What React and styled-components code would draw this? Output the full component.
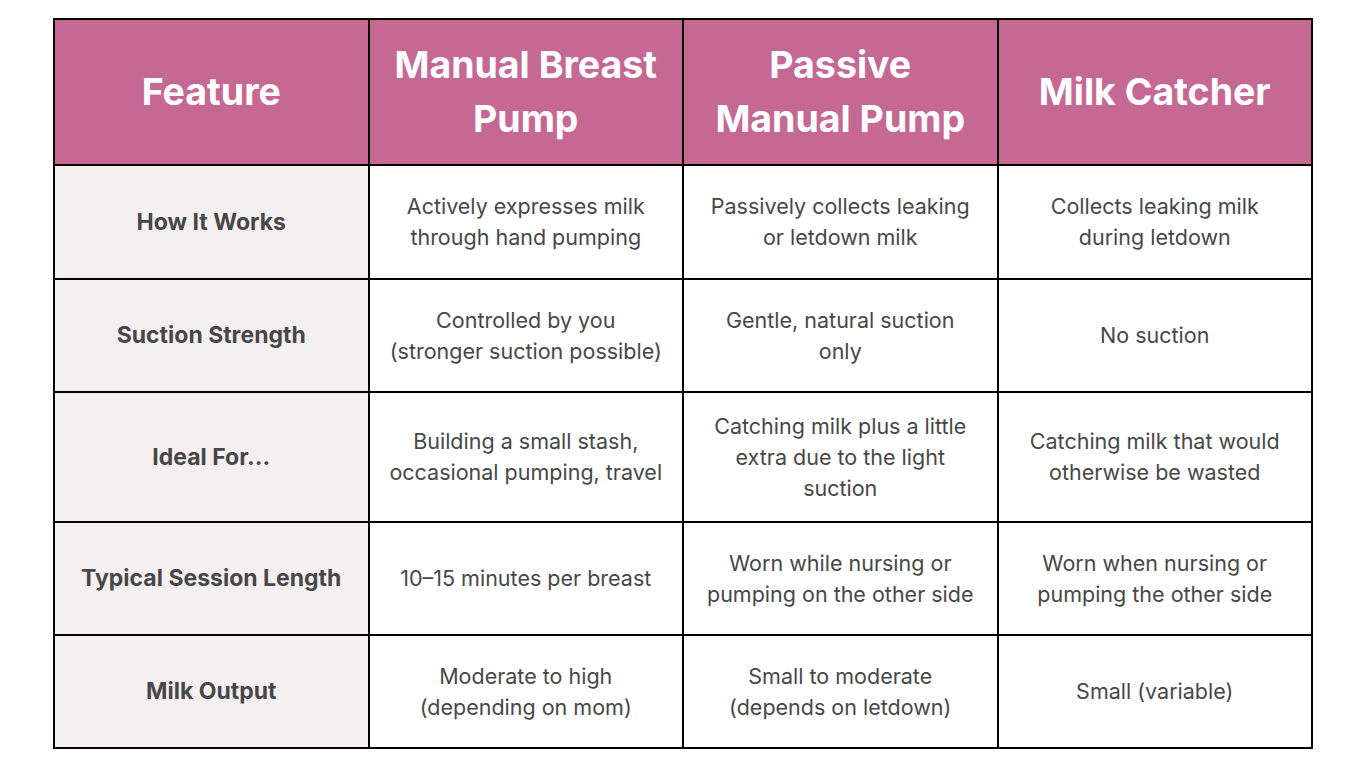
import React from "react";
import styled, { createGlobalStyle } from "styled-components";

const Global = createGlobalStyle`
  html, body { margin: 0; padding: 0; background: #ffffff; }
  body { font-family: "Inter", "Liberation Sans", sans-serif; }
`;

const Page = styled.div`
  padding: 18px 53px;
`;

const Table = styled.div`
  width: 1260px;
  display: grid;
  grid-template-columns: repeat(4, 1fr);
  grid-template-rows: 144px 112px 111px 128px 111px 111px;
  gap: 2px;
  padding: 2px;
  box-sizing: border-box;
  background: #000000;
`;

const HeadCell = styled.div`
  background: #c56894;
  color: #ffffff;
  font-weight: 700;
  font-size: 37.5px;
  line-height: 54px;
  display: flex;
  align-items: center;
  justify-content: center;
  text-align: center;
  padding: 0 6px;
`;

const Cell = styled.div`
  background: ${(p) => (p.$label ? "#f4f0f1" : "#ffffff")};
  color: #474747;
  font-weight: ${(p) => (p.$label ? 700 : 400)};
  font-size: ${(p) => (p.$label ? "23px" : "21.5px")};
  line-height: 31px;
  display: flex;
  align-items: center;
  justify-content: center;
  text-align: center;
  padding: 0 4px;
  white-space: nowrap;
`;

const headers = [
  ["Feature"],
  ["Manual Breast", "Pump"],
  ["Passive", "Manual Pump"],
  ["Milk Catcher"],
];

const rows = [
  [
    "How It Works",
    ["Actively expresses milk", "through hand pumping"],
    ["Passively collects leaking", "or letdown milk"],
    ["Collects leaking milk", "during letdown"],
  ],
  [
    "Suction Strength",
    ["Controlled by you", "(stronger suction possible)"],
    ["Gentle, natural suction", "only"],
    ["No suction"],
  ],
  [
    "Ideal For...",
    ["Building a small stash,", "occasional pumping, travel"],
    ["Catching milk plus a little", "extra due to the light", "suction"],
    ["Catching milk that would", "otherwise be wasted"],
  ],
  [
    "Typical Session Length",
    ["10–15 minutes per breast"],
    ["Worn while nursing or", "pumping on the other side"],
    ["Worn when nursing or", "pumping the other side"],
  ],
  [
    "Milk Output",
    ["Moderate to high", "(depending on mom)"],
    ["Small to moderate", "(depends on letdown)"],
    ["Small (variable)"],
  ],
];

const Lines = ({ lines }) =>
  lines.map((l, i) => (
    <React.Fragment key={i}>
      {i > 0 && <br />}
      {l}
    </React.Fragment>
  ));

export default function App() {
  return (
    <Page>
      <Global />
      <Table>
        {headers.map((h, i) => (
          <HeadCell key={i}>
            <span>
              <Lines lines={h} />
            </span>
          </HeadCell>
        ))}
        {rows.map((r, ri) => (
          <React.Fragment key={ri}>
            <Cell $label>{r[0]}</Cell>
            {r.slice(1).map((c, ci) => (
              <Cell key={ci}>
                <span>
                  <Lines lines={c} />
                </span>
              </Cell>
            ))}
          </React.Fragment>
        ))}
      </Table>
    </Page>
  );
}
